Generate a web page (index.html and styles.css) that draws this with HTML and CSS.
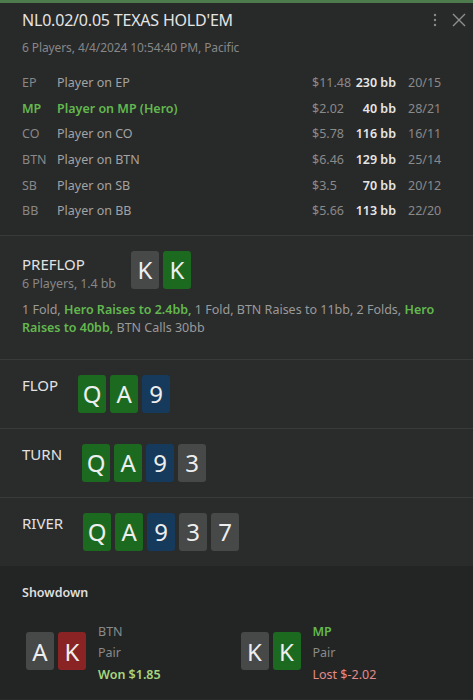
FILE: index.html
```html
<!DOCTYPE html>
<html lang="en">
  <head>
    <meta charset="UTF-8">
    <meta name="viewport" content="width=device-width, initial-scale=1.0">
    <title>Hand History</title>
    <link rel="stylesheet" href="styles.css">
  </head>
<body>
  <div class="accent"></div>

  <header class="hand-head">
    <div class="title-row">
      <h1>NL0.02/0.05 TEXAS HOLD'EM</h1>
      <div class="tools">
        <svg class="kebab" width="4" height="14" viewBox="0 0 4 14">
          <circle cx="2" cy="2" r="1.2"/>
          <circle cx="2" cy="7" r="1.2"/>
          <circle cx="2" cy="12" r="1.2"/>
        </svg>
        <svg class="close" width="14" height="14" viewBox="0 0 14 14">
          <path d="M1 1 L13 13 M13 1 L1 13"/>
        </svg>
      </div>
    </div>
    <p class="sub">6 Players, 4/4/2024 10:54:40 PM, Pacific</p>

    <div class="players">
      <span class="pos">EP</span><span class="name">Player on EP</span><span class="money">$11.48</span><span class="bb">230 bb</span><span class="ratio">20/15</span>
      <span class="pos hero">MP</span><span class="name hero">Player on MP (Hero)</span><span class="money">$2.02</span><span class="bb">40 bb</span><span class="ratio">28/21</span>
      <span class="pos">CO</span><span class="name">Player on CO</span><span class="money">$5.78</span><span class="bb">116 bb</span><span class="ratio">16/11</span>
      <span class="pos">BTN</span><span class="name">Player on BTN</span><span class="money">$6.46</span><span class="bb">129 bb</span><span class="ratio">25/14</span>
      <span class="pos">SB</span><span class="name">Player on SB</span><span class="money">$3.5</span><span class="bb">70 bb</span><span class="ratio">20/12</span>
      <span class="pos">BB</span><span class="name">Player on BB</span><span class="money">$5.66</span><span class="bb">113 bb</span><span class="ratio">22/20</span>
    </div>
  </header>

  <section class="street preflop">
    <div class="street-head">
      <div class="street-label">
        <h2>PREFLOP</h2>
        <p class="sub">6 Players, 1.4 bb</p>
      </div>
      <div class="cards">
        <span class="card gray">K</span>
        <span class="card green">K</span>
      </div>
    </div>
    <p class="actions">1 Fold, <b>Hero Raises to 2.4bb,</b> 1 Fold, BTN Raises to 11bb, 2 Folds, <b>Hero Raises to 40bb,</b> BTN Calls 30bb</p>
  </section>

  <section class="street">
    <h2>FLOP</h2>
    <div class="cards">
      <span class="card green">Q</span>
      <span class="card green">A</span>
      <span class="card blue">9</span>
    </div>
  </section>

  <section class="street">
    <h2>TURN</h2>
    <div class="cards">
      <span class="card green">Q</span>
      <span class="card green">A</span>
      <span class="card blue">9</span>
      <span class="card gray">3</span>
    </div>
  </section>

  <section class="street">
    <h2>RIVER</h2>
    <div class="cards">
      <span class="card green">Q</span>
      <span class="card green">A</span>
      <span class="card blue">9</span>
      <span class="card gray">3</span>
      <span class="card gray">7</span>
    </div>
  </section>

  <section class="showdown">
    <h3>Showdown</h3>
    <div class="results">
      <div class="result">
        <div class="cards">
          <span class="card gray">A</span>
          <span class="card red">K</span>
        </div>
        <div class="info">
          <span class="who">BTN</span>
          <span>Pair</span>
          <span class="won">Won $1.85</span>
        </div>
      </div>
      <div class="result">
        <div class="cards">
          <span class="card gray">K</span>
          <span class="card green">K</span>
        </div>
        <div class="info">
          <span class="who hero">MP</span>
          <span>Pair</span>
          <span class="lost">Lost $-2.02</span>
        </div>
      </div>
    </div>
  </section>
</body>
</html>
```

FILE: styles.css
```css
body {
  margin: 0;
  padding: 0;
  font-family: 'Noto Sans', 'Open Sans', sans-serif;
  background: #2a2b2b;
  color: #9b9b9b;
  width: 473px;
  height: 700px;
  overflow: hidden;
}

h1, h2, h3, p {
  margin: 0;
  font-weight: normal;
}

.accent {
  height: 3px;
  background-color: #4e7b4e;
}

.hand-head {
  background-color: #282929;
  padding: 6px 22px 11px;
}

.title-row {
  display: flex;
  align-items: flex-start;
  justify-content: space-between;
}

h1 {
  color: #e4e4e4;
  font-size: 16px;
  line-height: 22px;
  letter-spacing: -0.2px;
}

.tools {
  display: flex;
  gap: 15px;
  margin-top: 4px;
  margin-right: -15px;
}

.kebab {
  fill: #8a8a8a;
}

.close {
  stroke: #8f8f8f;
  stroke-width: 1.4;
}

.sub {
  font-size: 12px;
  line-height: 18px;
  color: #878787;
  margin-top: 8px;
  letter-spacing: -0.1px;
}

.players {
  display: grid;
  grid-template-columns: 35px 1fr 40px 44px 55px;
  grid-auto-rows: 25.6px;
  align-items: center;
  margin-top: 13px;
  font-size: 12.5px;
}

.pos {
  color: #888;
}

.name {
  color: #a3a3a3;
}

.money {
  color: #8a8a8a;
}

.bb {
  color: #e6e6e6;
  font-weight: 600;
  text-align: right;
}

.ratio {
  color: #8a8a8a;
  padding-left: 12px;
}

.hero {
  color: #62b84f;
  font-weight: 600;
}

.street {
  display: flex;
  align-items: flex-start;
  gap: 20px;
  padding: 15px 22px;
  border-top: 1px solid #393a3a;
}

.street h2 {
  color: #e2e2e2;
  font-size: 15px;
  line-height: 20px;
}

.preflop {
  display: block;
  padding-bottom: 22px;
}

.street-head {
  display: flex;
  align-items: flex-start;
}

.street-label {
  width: 109px;
  margin-top: 3px;
}

.preflop .sub {
  font-size: 12.5px;
  margin-top: 1px;
}

.actions {
  margin-top: 8px;
  font-size: 12.5px;
  line-height: 18px;
  color: #9a9a9a;
}

.actions b {
  color: #62b84f;
  font-weight: 600;
}

.cards {
  display: flex;
  gap: 4px;
}

.card {
  width: 28px;
  height: 38px;
  border-radius: 3px;
  display: flex;
  align-items: center;
  justify-content: center;
  color: #eeeeee;
  font-size: 24px;
}

.gray {
  background-color: #474848;
}

.green {
  background-color: #1b6a1f;
}

.blue {
  background-color: #163a5b;
}

.red {
  background-color: #8a2323;
}

.showdown {
  background-color: #232524;
  padding: 17px 22px 16px;
  height: 133px;
  box-sizing: border-box;
}

.showdown h3 {
  color: #dedede;
  font-size: 12.5px;
  font-weight: 600;
  line-height: 20px;
}

.results {
  display: grid;
  grid-template-columns: 1fr 1fr;
  margin-top: 15px;
}

.result {
  display: flex;
  align-items: center;
  gap: 12px;
  padding-left: 4px;
}

.info {
  display: flex;
  flex-direction: column;
  padding-top: 3px;
  font-size: 12.5px;
  line-height: 21.5px;
  color: #8a8a8a;
}

.won {
  color: #a8d67e;
  font-weight: 600;
}

.lost {
  color: #e38b8b;
}
```
